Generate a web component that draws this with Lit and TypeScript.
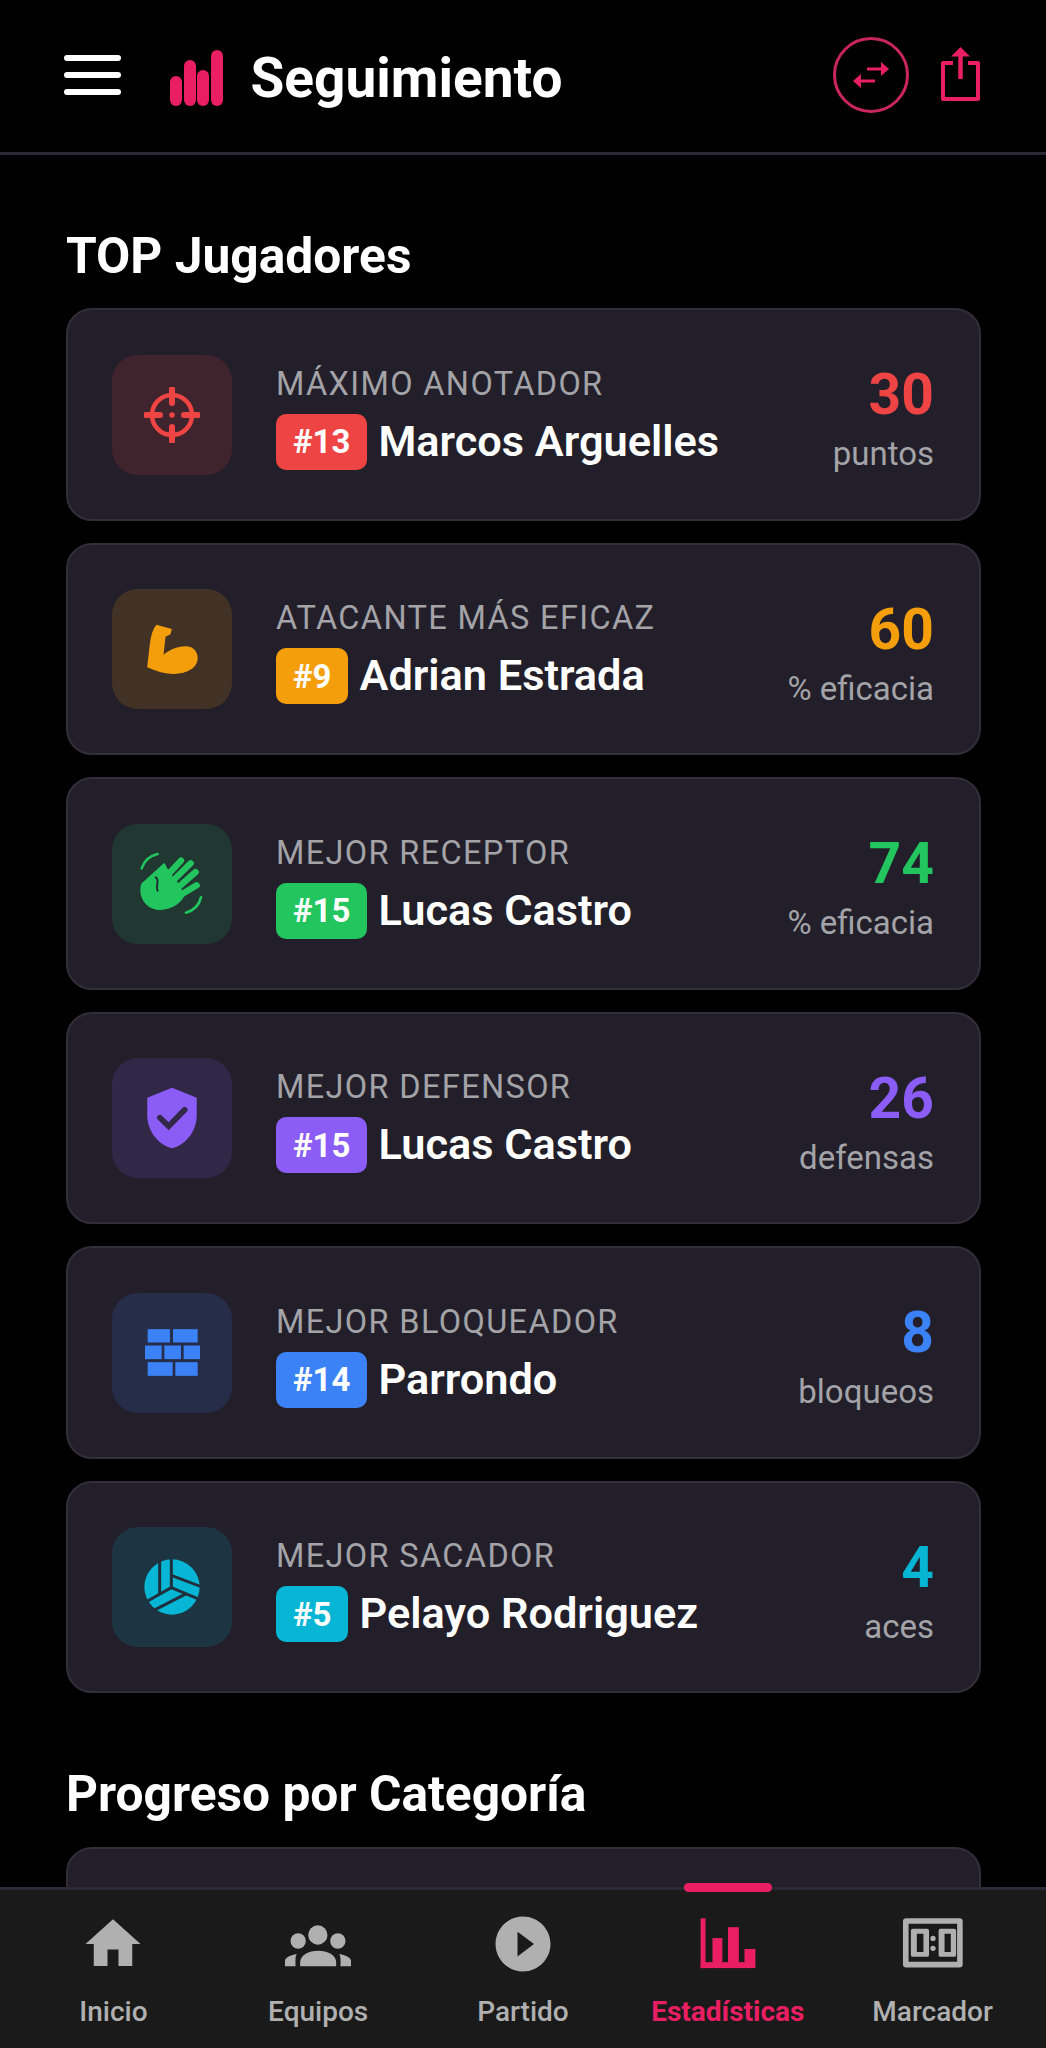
import { LitElement, html, css, svg } from "lit";
import { customElement } from "lit/decorators.js";

const crosshair = svg`<svg class="ic" width="56" height="56" viewBox="0 0 56 56"><circle cx="28" cy="28" r="20" fill="none" stroke="currentColor" stroke-width="4.500"/><circle cx="28" cy="28" r="2.800" fill="currentColor"/><path d="M28 2V16M28 40V54M2 28H16M40 28H54" stroke="currentColor" stroke-width="6" stroke-linecap="round" fill="none"/></svg>`;
const muscle = svg`<svg class="ic" width="51" height="50" viewBox="288 970 152 150"><path fill="currentColor" d="M316 972L362 985L358 1001L343 1008L337 1062C358 1044 395 1030 420 1040C446 1054 446 1090 420 1106C390 1126 338 1124 288 1100L296 1030C300 1002 305 985 316 972Z"/></svg>`;
const wave = svg`<svg class="ic" width="90" height="90" viewBox="6 -3 270 270"><path fill="currentColor" d="M50 130L118 68L135 100L165 135L178 168C165 195 130 210 105 210C70 210 46 182 46 150C46 142 47 136 50 130Z"/><path d="M125 108L168 62M146 120L197 70M162 140L212 96M165 166L215 136" fill="none" stroke="currentColor" stroke-width="19" stroke-linecap="round"/><path d="M92 112C106 122 90 135 98 152" fill="none" stroke="#22302f" stroke-width="6" stroke-linecap="round"/><path d="M50 85C58 62 75 47 98 42M183 218C205 212 222 195 228 172" fill="none" stroke="currentColor" stroke-width="8" stroke-linecap="round"/></svg>`;
const shield = svg`<svg class="ic" width="66" height="66" viewBox="0 0 24 24"><path fill="currentColor" d="M12 1 3 4.600V11c0 5.550 3.840 10.740 9 12 5.160-1.260 9-6.450 9-12V4.600z"/><path d="M7.600 11.900 10.800 15 16.600 9" fill="none" stroke="#322849" stroke-width="2.100" stroke-linecap="round"/></svg>`;
const bricks = svg`<svg class="ic" width="55" height="47" viewBox="162 182 165 140"><g fill="currentColor"><rect x="170" y="182" width="67" height="40"/><rect x="246" y="182" width="74" height="40"/><rect x="162" y="231" width="50" height="41"/><rect x="220" y="231" width="50" height="41"/><rect x="278" y="231" width="49" height="41"/><rect x="170" y="281" width="75" height="41"/><rect x="253" y="281" width="67" height="41"/></g></svg>`;
const ball = svg`<svg class="ic" width="56" height="56" viewBox="161 864 168 168"><circle cx="245" cy="948" r="83" fill="currentColor"/><path d="M243 860V950L172 990M208 860V972M243 950L335 988M243 913L335 948M183 1022L288 968" fill="none" stroke="#1f2f3d" stroke-width="9"/></svg>`;

const PLAYERS = [
  { label: "MÁXIMO ANOTADOR", num: "#13", name: "Marcos Arguelles", value: "30", unit: "puntos", c: "#ef4444", icon: crosshair },
  { label: "ATACANTE MÁS EFICAZ", num: "#9", name: "Adrian Estrada", value: "60", unit: "% eficacia", c: "#f59e0b", icon: muscle },
  { label: "MEJOR RECEPTOR", num: "#15", name: "Lucas Castro", value: "74", unit: "% eficacia", c: "#22c55e", icon: wave },
  { label: "MEJOR DEFENSOR", num: "#15", name: "Lucas Castro", value: "26", unit: "defensas", c: "#8b5cf6", icon: shield },
  { label: "MEJOR BLOQUEADOR", num: "#14", name: "Parrondo", value: "8", unit: "bloqueos", c: "#3b82f6", icon: bricks },
  { label: "MEJOR SACADOR", num: "#5", name: "Pelayo Rodriguez", value: "4", unit: "aces", c: "#06b6d4", icon: ball },
];

const home = svg`<svg width="66" height="66" viewBox="0 0 24 24"><path fill="currentColor" d="M10 20v-6h4v6h5v-8h3L12 3 2 12h3v8z"/></svg>`;
const groups = svg`<svg width="66" height="66" viewBox="46.500 18 198 198"><g fill="currentColor"><circle cx="145" cy="90" r="29"/><circle cx="86" cy="108" r="23"/><circle cx="205" cy="108" r="23"/><path d="M92 184V172C92 150 118 137 146 137C174 137 200 150 200 172V184Z"/><path d="M45 184V172C45 160 58 151 82 147C77 154 78 165 78 184Z"/><path d="M246 184V172C246 160 233 151 209 147C214 154 213 165 213 184Z"/></g></svg>`;
const play = svg`<svg width="66" height="66" viewBox="0 0 24 24"><path fill="currentColor" d="M12 2C6.480 2 2 6.480 2 12s4.480 10 10 10 10-4.480 10-10S17.520 2 12 2zm-2 14.500v-9l6 4.500-6 4.500z"/></svg>`;
const chart = svg`<svg width="66" height="66" viewBox="165 153 200 200"><g fill="currentColor"><rect x="182" y="175" width="15" height="151"/><rect x="182" y="308" width="166" height="18"/><rect x="218" y="235" width="30" height="75"/><rect x="265" y="202" width="33" height="108"/><rect x="315" y="268" width="33" height="42"/></g></svg>`;
const score = svg`<svg width="66" height="66" viewBox="778 155 200 200"><path fill="currentColor" fill-rule="evenodd" d="M797 177H958A10 10 0 0 1 968 187V316A10 10 0 0 1 958 326H797A10 10 0 0 1 787 316V187A10 10 0 0 1 797 177ZM804 194V309H951V194Z"/><g fill="currentColor"><path fill-rule="evenodd" d="M817 209H860A6 6 0 0 1 866 215V288A6 6 0 0 1 860 294H817A6 6 0 0 1 811 288V215A6 6 0 0 1 817 209ZM829 224V279H849V224Z"/><path fill-rule="evenodd" d="M901 209H942A6 6 0 0 1 948 215V288A6 6 0 0 1 942 294H901A6 6 0 0 1 895 288V215A6 6 0 0 1 901 209ZM913 224V279H932V224Z"/><circle cx="878" cy="238" r="8"/><circle cx="878" cy="268" r="8"/></g></svg>`;

const NAV = [
  { label: "Inicio", icon: home },
  { label: "Equipos", icon: groups },
  { label: "Partido", icon: play },
  { label: "Estadísticas", icon: chart, active: true },
  { label: "Marcador", icon: score },
];

@customElement("app-root")
export class AppRoot extends LitElement {
  static styles = css`
    :host { display: flex; flex-direction: column; width: 1046px; height: 2048px; overflow: hidden; background: #000; color: #fff; font-family: Roboto, "Liberation Sans", sans-serif; }
    .top { flex: none; height: 152px; box-sizing: content-box; display: flex; align-items: center; padding: 0 65px 0 64px; border-bottom: 3px solid #2c2937; }
    .burger { width: 57px; display: flex; flex-direction: column; gap: 11px; margin-top: -2px; }
    .burger i { display: block; height: 6px; border-radius: 3px; background: #fff; }
    .logo { display: flex; align-items: flex-end; gap: 1.5px; height: 56px; margin: 4px 0 0 49px; }
    .logo i { display: block; width: 12px; border-radius: 6px; background: #e91e63; }
    .top h1 { margin: 4px 0 0 28px; flex: 1; font-size: 55px; line-height: 60px; font-weight: 700; }
    .swap { width: 76px; height: 76px; box-sizing: border-box; border: 3px solid #c9265e; border-radius: 50%; display: flex; align-items: center; justify-content: center; margin: -2px 31px 0 0; }
    .share { display: block; margin-top: -5px; }
    main { flex: 1; min-height: 0; overflow: hidden; padding: 0 65px 0 66px; }
    h2 { margin: 0; font-size: 49.700px; line-height: 52px; font-weight: 700; }
    .h1 { margin-top: 75px; margin-bottom: 26px; }
    .h2 { margin-top: 75px; margin-bottom: 27px; }
    .list { display: flex; flex-direction: column; gap: 22px; }
    .card { box-sizing: border-box; height: 212.500px; display: flex; align-items: center; padding: 0 45px 0 44px; background: #221f2a; border: 2px solid #322e3a; border-radius: 26px; }
    .box { flex: none; width: 120px; height: 120px; margin-top: 1px; border-radius: 26px; display: flex; align-items: center; justify-content: center; color: var(--c); background: color-mix(in srgb, var(--c) 15%, transparent); }
    .ic { display: block; }
    .info { flex: 1; min-width: 0; margin-left: 44px; margin-top: 5px; }
    .label { font-size: 32.500px; line-height: 40px; letter-spacing: 1.350px; color: #a3a3a8; white-space: nowrap; }
    .who { display: flex; align-items: center; gap: 11px; margin-top: 10px; }
    .badge { flex: none; height: 56px; padding: 0 17px; border-radius: 10px; display: flex; align-items: center; font-size: 33px; font-weight: 700; color: #fff; background: var(--c); }
    .name { font-size: 43.300px; line-height: 56px; font-weight: 600; white-space: nowrap; }
    .stat { flex: none; text-align: right; margin-top: 10.600px; }
    .val { font-size: 57px; line-height: 60px; font-weight: 700; color: var(--c); }
    .unit { font-size: 33px; line-height: 40px; color: #a3a3a8; margin-top: 9px; }
    .tail { height: 120px; background: #221f2a; border: 2px solid #322e3a; border-radius: 26px; }
    nav { flex: none; height: 158px; position: relative; display: flex; padding: 0 11px; background: #1a1a1a; border-top: 3px solid #2c2937; }
    .tab { flex: 1; display: flex; flex-direction: column; align-items: center; color: #b0b0b0; padding-top: 21px; position: relative; }
    .tab svg { display: block; }
    .tab span { font-size: 28px; line-height: 34px; margin-top: 18px; font-weight: 500; white-space: nowrap; }
    .tab.on { color: #e91e63; }
    .tab.on span { font-weight: 700; }
    .bar { position: absolute; top: -7px; left: 50%; margin-left: -44px; width: 88px; height: 9px; border-radius: 5px; background: #e91e63; }
  `;

  render() {
    return html`
      <header class="top">
        <div class="burger"><i></i><i></i><i></i></div>
        <div class="logo">${[30, 46, 36, 56].map((h) => html`<i style="height:${h}px"></i>`)}</div>
        <h1>Seguimiento</h1>
        <div class="swap"><svg width="36" height="26" viewBox="0 0 36 26"><g fill="#e91e63"><path d="M14 5.500H29V8.500H14Z"/><path d="M28 0L36 7L28 14Z"/><path d="M7 17.500H22V20.500H7Z"/><path d="M8 12L0 19L8 26Z"/></g></svg></div>
        <svg class="share" width="41" height="56" viewBox="0 0 41 56"><path d="M13 17H3V53H38V17H28" fill="none" stroke="#e91e63" stroke-width="4" stroke-linejoin="round"/><path d="M20.500 10V33" stroke="#e91e63" stroke-width="4.500" fill="none"/><path d="M11 10.500L20.500 1L30 10.500Z" fill="#e91e63"/></svg>
      </header>
      <main>
        <h2 class="h1">TOP Jugadores</h2>
        <div class="list">
          ${PLAYERS.map(
            (p) => html`<div class="card" style="--c:${p.c}">
              <div class="box">${p.icon}</div>
              <div class="info">
                <div class="label">${p.label}</div>
                <div class="who"><span class="badge">${p.num}</span><span class="name">${p.name}</span></div>
              </div>
              <div class="stat"><div class="val">${p.value}</div><div class="unit">${p.unit}</div></div>
            </div>`
          )}
        </div>
        <h2 class="h2">Progreso por Categoría</h2>
        <div class="tail"></div>
      </main>
      <nav>
        ${NAV.map(
          (n) => html`<div class="tab ${n.active ? "on" : ""}">
            ${n.active ? html`<div class="bar"></div>` : ""}${n.icon}<span>${n.label}</span>
          </div>`
        )}
      </nav>
    `;
  }
}
